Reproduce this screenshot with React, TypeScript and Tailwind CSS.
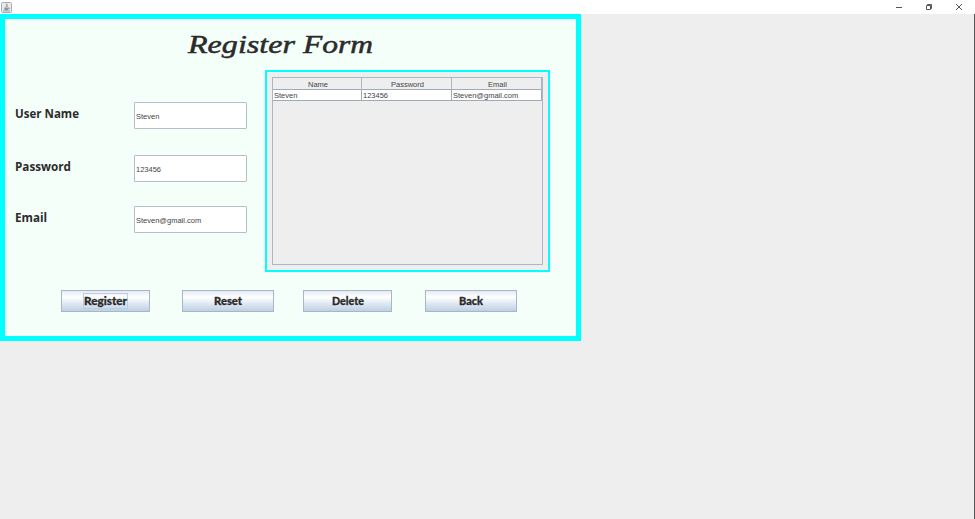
import React from "react";

const fields = [
  { label: "User Name", value: "Steven", gap: "mt-[32px]", width: 64 },
  { label: "Password", value: "123456", gap: "mt-[26px]", width: 56 },
  { label: "Email", value: "Steven@gmail.com", gap: "mt-[24px]", width: 32 },
];

const columns = ["Name", "Password", "Email"];
const record = ["Steven", "123456", "Steven@gmail.com"];

const buttons = [
  { label: "Register", size: "w-[89px] mr-[32px]", width: 43, focused: true },
  { label: "Reset", size: "w-[92px] mr-[29px]", width: 28, focused: false },
  { label: "Delete", size: "w-[89px] mr-[33px]", width: 32, focused: false },
  { label: "Back", size: "w-[92px]", width: 24, focused: false },
];

function JavaIcon() {
  return (
    <svg width="11" height="11" viewBox="0 0 11 11">
      <rect x="0.5" y="0.5" width="10" height="10" rx="1" fill="#e4edf5" stroke="#a5afb8" />
      <path d="M5.4 1.5c1.5 1-1.3 1.8 0 3.5M6.7 3c-.9.6-.7 1 0 1.8" fill="none" stroke="#e99a50" strokeWidth="1.1" />
      <path d="M3.2 5.5h4.2v1.2c0 1-.8 1.5-2.1 1.5S3.2 7.7 3.2 6.7z" fill="#8298ac" />
      <path d="M7.4 5.9h1v1h-1M2 8.9h7" fill="none" stroke="#8298ac" strokeWidth="0.9" />
    </svg>
  );
}

function TitleBar() {
  return (
    <header className="flex h-[14px] items-center justify-between bg-white pl-[1px] pr-[12px]">
      <JavaIcon />
      <div className="flex items-center gap-[22px] text-[#555]">
        <svg width="8" height="8" viewBox="0 0 8 8" stroke="currentColor">
          <path d="M1 4.5h6" />
        </svg>
        <svg width="8" height="8" viewBox="0 0 8 8" fill="none" stroke="currentColor">
          <path d="M1.500 2.500h4v4h-4zM2.500 2v-.500h4v4H6" />
        </svg>
        <svg width="8" height="8" viewBox="0 0 8 8" fill="none" stroke="currentColor">
          <path d="M1 1l6 6M7 1L1 7" />
        </svg>
      </div>
    </header>
  );
}

type FitTextProps = { text: string; width: number; height: number; baseline: number; className: string };

function FitText({ text, width, height, baseline, className }: FitTextProps) {
  return (
    <svg width={width} height={height} className="shrink-0 overflow-visible">
      <text x="0" y={baseline} textLength={width} lengthAdjust="spacingAndGlyphs" fill="#2b2b2b" className={className}>
        {text}
      </text>
    </svg>
  );
}

export default function App() {
  return (
    <div className="flex h-[519px] w-[975px] flex-col overflow-hidden bg-[#eeeeee] font-['Liberation_Sans',Arial,sans-serif] text-[7.5px] text-[#444]">
      <TitleBar />
      <div className="flex flex-1 justify-between">
        <main className="h-[327px] w-[581px] border-[5px] border-[#00ffff] bg-[#f5fffa]">
          <h1 className="flex h-[51px] gap-[8px] pl-[183px] pt-[13px]">
            <FitText text="Register" width={107} height={30} baseline={21} className="stroke-[#2b2b2b] stroke-[0.5px] font-['Lucida_Handwriting','Liberation_Serif',cursive] text-[25px] italic" />
            <FitText text="Form" width={70} height={30} baseline={21} className="stroke-[#2b2b2b] stroke-[0.5px] font-['Lucida_Handwriting','Liberation_Serif',cursive] text-[25px] italic" />
          </h1>
          <div className="flex h-[202px]">
            <section className="w-[260px] pl-[10px]">
              {fields.map((f) => (
                <div key={f.label} className={`flex h-[27px] ${f.gap}`}>
                  <div className="w-[119px] pt-[2px]">
                    <FitText text={f.label} width={f.width} height={18} baseline={14} className="font-['Trebuchet_MS','Open_Sans',sans-serif] text-[12.5px] font-bold" />
                  </div>
                  <div className="flex w-[113px] items-center rounded-[1px] border border-[#b4bfca] bg-white pl-px pt-[2px]">{f.value}</div>
                </div>
              ))}
            </section>
            <section className="w-[285px] border-2 border-[#00ffff] bg-[#eeeeee] p-[5px]">
              <div className="h-[188px] w-[271px] border border-[#aeb7c1]">
                <div className="grid h-[12px] grid-cols-[89px_90px_90px] border-b border-[#9eabb7]">
                  {columns.map((c) => (
                    <div key={c} className="flex items-center justify-center border-r border-[#aeb7c1] pl-[2px] pt-[2px] leading-[10px]">{c}</div>
                  ))}
                </div>
                <div className="grid h-[11px] grid-cols-[89px_90px_90px] border-b border-[#9eabb7] bg-white">
                  {record.map((c) => (
                    <div key={c} className="h-[10px] border-r border-[#9eabb7] pl-px leading-[11px]">{c}</div>
                  ))}
                </div>
              </div>
            </section>
          </div>
          <div className="flex pl-[56px] pt-[18px]">
            {buttons.map((b) => (
              <button key={b.label} className={`flex h-[22px] items-center justify-center border border-[#aab6c5] bg-linear-to-b from-[#e2eaf3] via-white via-30% to-[#bdd0e5] ${b.size}`}>
                <span className={b.focused ? "border border-[#b9cee3]" : "border border-transparent"}>
                  <FitText text={b.label} width={b.width} height={14} baseline={11} className="stroke-[#2b2b2b] stroke-[0.3px] font-['Lato',sans-serif] text-[12px] font-black" />
                </span>
              </button>
            ))}
          </div>
        </main>
        <div className="w-px bg-[#555]" />
      </div>
    </div>
  );
}
